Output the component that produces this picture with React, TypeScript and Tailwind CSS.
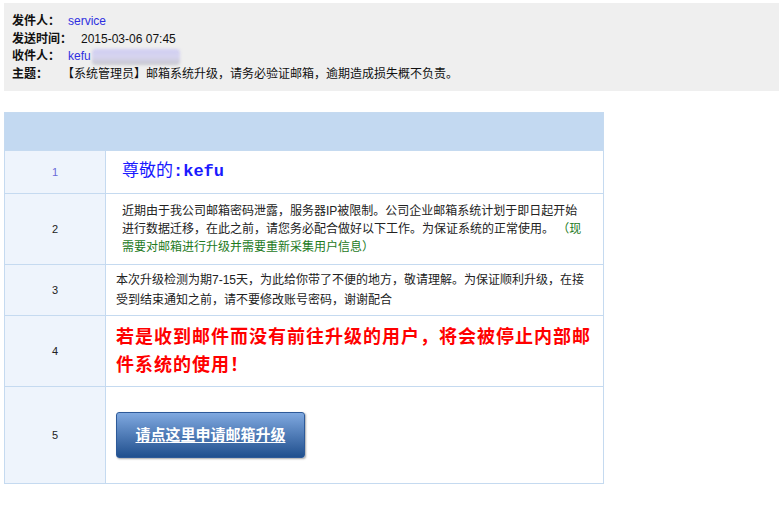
const cjk = "font-['Liberation_Sans','Noto_Sans_CJK_SC',sans-serif]";

type Row = {
	n: string;
	h: string;
	numColor?: string;
	content: React.ReactNode;
};

const rows: Row[] = [
	{
		n: '1',
		h: 'h-[43px]',
		numColor: 'text-[#6a6ad8]',
		content: (
			<div className="pl-[16px] text-[17px] leading-[20px] text-[#1a1aff]">
				尊敬的<span className="font-['Liberation_Mono',monospace] font-bold">:kefu</span>
			</div>
		),
	},
	{
		n: '2',
		h: 'h-[71px]',
		content: (
			<div className="pl-[16px] text-[12px] leading-[18px] text-[#222]">
				近期由于我公司邮箱密码泄露，服务器IP被限制。公司企业邮箱系统计划于即日起开始
				<br />
				进行数据迁移，在此之前，请您务必配合做好以下工作。为保证系统的正常使用。
				<span className="text-[#1d7a1d]">
					{' '}（现
					<br />
					需要对邮箱进行升级并需要重新采集用户信息）
				</span>
			</div>
		),
	},
	{
		n: '3',
		h: 'h-[51px]',
		content: (
			<div className="pl-[10px] text-[12px] leading-[20px] text-[#222]">
				本次升级检测为期7-15天，为此给你带了不便的地方，敬请理解。为保证顺利升级，在接
				<br />
				受到结束通知之前，请不要修改账号密码，谢谢配合
			</div>
		),
	},
	{
		n: '4',
		h: 'h-[71px]',
		content: (
			<div className="pl-[10px] text-[18px] font-bold leading-[28px] tracking-[1px] text-[#ff0000]">
				若是收到邮件而没有前往升级的用户，将会被停止内部邮
				<br />
				件系统的使用！
			</div>
		),
	},
	{
		n: '5',
		h: 'h-[97px]',
		content: (
			<div className="pl-[10px]">
				<a
					href="#"
					className="flex h-[46px] w-[189px] items-center justify-center rounded-[3px] border border-[#2d5a99] bg-gradient-to-b from-[#80a9e0] to-[#20508e] text-[15px] font-bold text-white underline underline-offset-2 shadow-[1px_1px_2px_rgba(0,0,0,0.35)]"
				>
					请点这里申请邮箱升级
				</a>
			</div>
		),
	},
];

const App: React.FC = () => {
	return (
		<div className={`min-h-[521px] w-[783px] bg-white ${cjk}`}>
			<div className="px-1 pt-[3px]">
				<div className="bg-[#efefef] pb-[7px] pl-2 pt-[10px] text-[12px] leading-[17.7px] text-[#111]">
					<div className="flex">
						<span className="w-[56px] font-bold">发件人：</span>
						<span className="text-[#2f2fe0]">service</span>
					</div>
					<div className="flex">
						<span className="w-[69px] font-bold">发送时间：</span>
						<span>2015-03-06 07:45</span>
					</div>
					<div className="flex items-center">
						<span className="w-[56px] font-bold">收件人：</span>
						<span className="text-[#2f2fe0]">kefu</span>
						<span className="ml-[1px] h-[16px] w-[88px] rounded-[4px] bg-gradient-to-b from-[#cfcdf2] via-[#d6d4ef] to-[#c6c6cc] blur-[1.5px]" />
					</div>
					<div className="flex">
						<span className="w-[50px] font-bold">主题：</span>
						<span>【系统管理员】邮箱系统升级，请务必验证邮箱，逾期造成损失概不负责。</span>
					</div>
				</div>
			</div>

			<div className="ml-1 mt-[21px] w-[600px] border border-[#c5daf0]">
				<div className="h-[37px] bg-[#c3d9f1]" />
				{rows.map((row) => (
					<div key={row.n} className={`flex border-t border-[#c5daf0] ${row.h}`}>
						<div
							className={`flex w-[101px] shrink-0 items-center justify-center border-r border-[#c5daf0] bg-[#eef4fc] text-[11px] ${row.numColor ?? 'text-[#222]'}`}
						>
							{row.n}
						</div>
						<div className="flex flex-1 items-center">{row.content}</div>
					</div>
				))}
			</div>
		</div>
	);
};

export default App;
